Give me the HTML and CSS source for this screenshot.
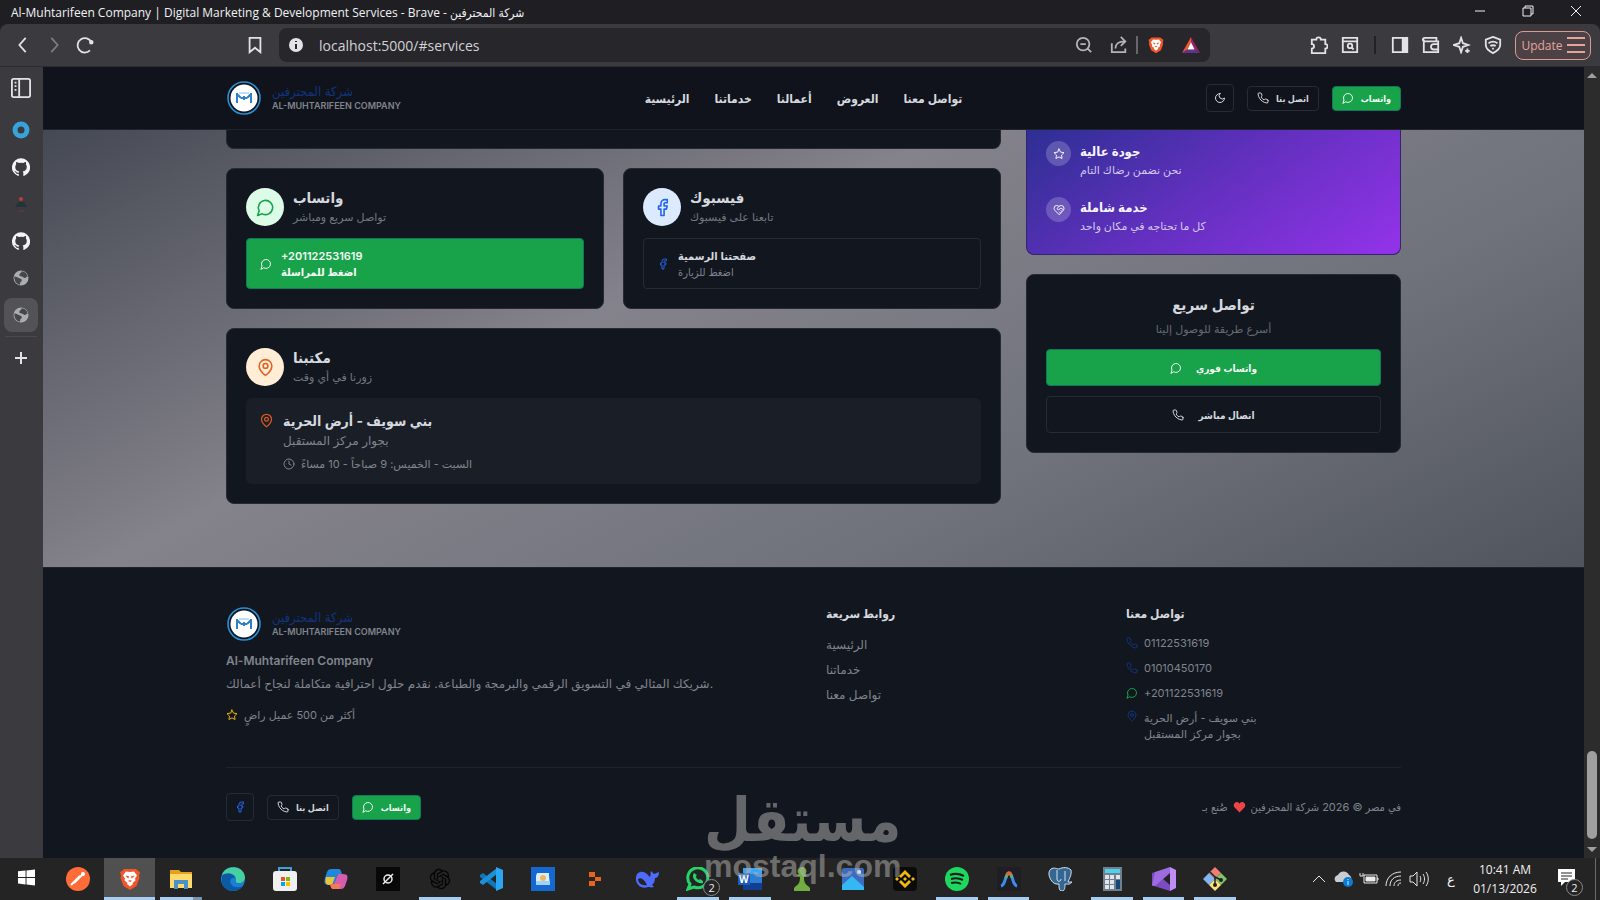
FILE: index.html
```html
<!DOCTYPE html>
<html lang="en">
  <head>
    <meta charset="UTF-8" />
    <meta name="viewport" content="width=device-width, initial-scale=1.0" />
    <title>Al-Muhtarifeen Company | Digital Marketing &amp; Development Services</title>
    <link rel="stylesheet" href="styles.css">
  </head>
  <body>
    <!-- Shared icons -->
    <svg class="sprite" aria-hidden="true">
      <symbol id="i-chat" viewBox="0 0 24 24"><path d="M7.9 20A9 9 0 1 0 4 16.1L2 22Z" /></symbol>
      <symbol id="i-phone" viewBox="0 0 24 24"><path d="M22 16.92v3a2 2 0 0 1-2.18 2 19.79 19.79 0 0 1-8.63-3.07 19.5 19.5 0 0 1-6-6 19.79 19.79 0 0 1-3.07-8.67A2 2 0 0 1 4.11 2h3a2 2 0 0 1 2 1.72c.127.96.361 1.903.7 2.81a2 2 0 0 1-.45 2.11L8.09 9.91a16 16 0 0 0 6 6l1.27-1.27a2 2 0 0 1 2.11-.45c.907.339 1.85.573 2.81.7A2 2 0 0 1 22 16.92z" /></symbol>
      <symbol id="i-pin" viewBox="0 0 24 24"><path d="M20 10c0 6-8 12-8 12s-8-6-8-12a8 8 0 0 1 16 0Z" /><circle cx="12" cy="10" r="3" /></symbol>
      <symbol id="i-facebook" viewBox="0 0 24 24"><path d="M18 2h-3a5 5 0 0 0-5 5v3H7v4h3v8h4v-8h3l1-4h-4V7a1 1 0 0 1 1-1h3z" /></symbol>
      <symbol id="i-star" viewBox="0 0 24 24"><path d="M12 2l3.09 6.26L22 9.27l-5 4.87 1.18 6.88L12 17.77l-6.18 3.25L7 14.14 2 9.27l6.91-1.01z" /></symbol>
      <symbol id="i-care" viewBox="0 0 24 24"><path d="M19 14c1.49-1.46 3-3.21 3-5.5A5.5 5.5 0 0 0 16.500 3c-1.760 0-3 .5-4.500 2-1.500-1.500-2.740-2-4.500-2A5.500 5.500 0 0 0 2 8.500c0 2.300 1.500 4.050 3 5.500l7 7Z" /><path d="M12 5 9.040 7.960a2.170 2.170 0 0 0 0 3.080c.820.820 2.130.850 3 .070l2.070-1.900a2.820 2.820 0 0 1 3.790 0l2.960 2.660M18 15l-2-2M15 18l-2-2" /></symbol>
      <symbol id="i-clock" viewBox="0 0 24 24"><circle cx="12" cy="12" r="10" /><path d="M12 6v6l4 2" /></symbol>
      <symbol id="i-moon" viewBox="0 0 24 24"><path d="M12 3a6 6 0 0 0 9 9 9 9 0 1 1-9-9Z" /></symbol>
      <symbol id="i-logo" viewBox="0 0 36 36">
        <circle cx="18" cy="18" r="16" fill="#0b1220" stroke="#2b8fd0" stroke-width="1.6" />
        <circle cx="18" cy="18" r="13.500" fill="#fff" />
        <path d="M11 23V13M25 23V13M11 14l4 4M25 14l-4 4M15 18h6M18 16v4" fill="none" stroke="#2f7fc9" stroke-width="2" />
        <path d="M13 13h10" stroke="#8ab9e8" stroke-width="1" />
      </symbol>
      <symbol id="i-github" viewBox="0 0 24 24"><path fill="#f4f4f6" d="M12 .5a12 12 0 0 0-3.800 23.400c.6.100.8-.3.8-.6v-2.200c-3.300.7-4-1.400-4-1.400-.5-1.400-1.300-1.800-1.300-1.800-1.100-.7.100-.7.100-.7 1.200.1 1.800 1.200 1.800 1.200 1.100 1.800 2.800 1.300 3.500 1 .1-.8.400-1.300.8-1.600-2.700-.3-5.500-1.300-5.500-6 0-1.300.5-2.400 1.200-3.200 0-.4-.5-1.600.2-3.200 0 0 1-.3 3.300 1.200a11.500 11.500 0 0 1 6 0c2.300-1.500 3.300-1.200 3.300-1.200.7 1.600.2 2.800.1 3.200.8.8 1.200 1.900 1.200 3.200 0 4.700-2.800 5.700-5.500 6 .5.400.9 1.200.9 2.300v3.200c0 .3.200.7.8.6A12 12 0 0 0 12 .5z" /></symbol>
      <symbol id="i-globe" viewBox="0 0 24 24"><circle cx="12" cy="12" r="10" fill="#a9acb1" /><path fill="#46464b" d="M3 10c3 0 4 1 6 2s4 1 4 3-2 2-2 3 0 2-1 3c-4-1-7-5-7-11zM13 3c4 0 7 3 8 7-2 0-2 2-4 2s-2-2-4-2-4-1-3-3 2-1 3-4z" /></symbol>
      <symbol id="i-brave" viewBox="0 0 24 24"><path fill="#f1562b" d="M6 2h12l2 2 2 1-1 4 .5 2-3 8L12 23l-6.500-4-3-8L3 9 2 5l2-1z" /><path fill="#fff" d="m12 5 4-.5 3 4-2 3 .5 2-3 2.500.5 1L12 19.500 9 17l.5-1-3-2.500.5-2-2-3 3-4z" /><path fill="#f1562b" d="m7.500 8.500 3.500.8-.5 2.200-2-1.500zM16.500 8.500l-3.500.8.5 2.200 2-1.500zM10 14l2-1 2 1-2 1z" /></symbol>
    </svg>

    <!-- Window title -->
    <header class="titlebar">
      <span class="window-title">Al-Muhtarifeen Company | Digital Marketing &amp; Development Services - Brave - شركة المحترفين</span>
      <div class="window-controls">
        <button aria-label="Minimize"><svg viewBox="0 0 12 12"><path d="M1 6h10" /></svg></button>
        <button aria-label="Restore"><svg viewBox="0 0 12 12"><path d="M1 3h8v8H1zM3 3V1h8v8H9" /></svg></button>
        <button aria-label="Close"><svg viewBox="0 0 12 12"><path d="m1 1 10 10M11 1 1 11" /></svg></button>
      </div>
    </header>

    <!-- Browser toolbar -->
    <div class="toolbar">
      <div class="nav-buttons">
        <button aria-label="Back"><svg viewBox="0 0 20 20"><path d="M13 2 6 10l7 8" /></svg></button>
        <button class="dim" aria-label="Forward"><svg viewBox="0 0 20 20"><path d="m7 2 7 8-7 8" /></svg></button>
        <button aria-label="Reload"><svg viewBox="0 0 20 20"><path d="M15.500 16A8 8 0 1 1 17 7" /><circle cx="17" cy="7" r="1.500" fill="currentColor" /></svg></button>
        <button class="bookmark" aria-label="Bookmark"><svg viewBox="0 0 20 20"><path d="M4 2h12v16l-6-5-6 5z" /></svg></button>
      </div>
      <div class="address-bar">
        <svg class="info" viewBox="0 0 16 16"><circle cx="8" cy="8" r="7" fill="#e3e3e6" /><path d="M8 7v5M8 4v1" stroke="#26262b" stroke-width="2" /></svg>
        <input type="text" aria-label="Address" value="localhost:5000/#services" />
        <button aria-label="Zoom"><svg viewBox="0 0 20 20"><circle cx="9" cy="9" r="7" /><path d="m14 14 4 4M6 9h6" /></svg></button>
        <button aria-label="Share"><svg viewBox="0 0 20 20"><path d="M2 8v10h15v-4M6 14c0-5 4-8 10-8M12 1l5 5-5 5" /></svg></button>
        <span class="separator"></span>
        <button class="shield" aria-label="Brave Shields"><svg><use href="#i-brave" /></svg></button>
        <button class="rewards" aria-label="Rewards"><svg viewBox="0 0 20 20"><path d="M10 1 0 19l6-4 4-8z" fill="#f2562f" /><path d="m10 1 10 18-6-4-4-8z" fill="#9c2069" /><path d="M0 19h20l-6-4H6z" fill="#65308f" /><path d="m10 7 4 8H6z" fill="#fff" /></svg></button>
      </div>
      <div class="tools">
        <button aria-label="Extensions"><svg viewBox="0 0 20 20"><path d="M2 4h5a2.500 2.500 0 0 1 5 0h5v5a2.500 2.500 0 0 1 0 5v5H2v-5a2.500 2.500 0 0 0 0-5z" /></svg></button>
        <button aria-label="Search tabs"><svg viewBox="0 0 20 20"><path d="M2 2h16v16H2zM2 6h16" /><circle cx="10" cy="11" r="2.500" /><path d="m12 13 2 2" /></svg></button>
        <span class="separator dark"></span>
        <button aria-label="Sidebar"><svg viewBox="0 0 20 20"><path d="M2 2h16v16H2z" /><path d="M13 2h5v16h-5z" fill="currentColor" /></svg></button>
        <button aria-label="Wallet"><svg viewBox="0 0 20 20"><path d="M16 6V2H3a2 2 0 0 0 0 4h15v12H2V4M18 9h-5a3 3 0 0 0 0 6h5" /></svg></button>
        <button aria-label="Leo AI"><svg viewBox="0 0 20 20"><path d="m9 2 2 6 6 2-6 2-2 6-2-6-6-2 6-2zM16 14v5M13.500 16.500h5" /></svg></button>
        <button aria-label="VPN"><svg viewBox="0 0 20 20"><path d="m10 1 8 3v6c0 4-4 7-8 9-4-2-8-5-8-9V4zM5 8c3-2 7-2 10 0M7 11c2-1 4-1 6 0M9 14h2" /></svg></button>
        <button class="update">Update <svg viewBox="0 0 18 18"><path d="M0 2h18M0 9h18M0 16h18" /></svg></button>
      </div>
    </div>

    <div class="workspace">
      <!-- Vertical tabs -->
      <nav class="tabs" aria-label="Tabs">
        <button class="panel" aria-label="Tab panel"><svg viewBox="0 0 22 22"><rect x="1" y="1" width="20" height="20" rx="2" /><path d="M9 1v20M4 5h2M4 9h2M4 13h2" /></svg></button>
        <button aria-label="Tab 1"><svg viewBox="0 0 18 18"><circle cx="9" cy="9" r="6" fill="none" stroke="#38a3d8" stroke-width="5" /></svg></button>
        <button aria-label="GitHub"><svg><use href="#i-github" /></svg></button>
        <button aria-label="Tab 3"><svg viewBox="0 0 18 18"><path d="M3 12h12l-3-5H6z" fill="#22343a" /><path d="M6 16h6" stroke="#7a3034" /><circle cx="9" cy="4" r="2" fill="#c23b35" /></svg></button>
        <button aria-label="GitHub"><svg><use href="#i-github" /></svg></button>
        <button aria-label="Tab 5"><svg><use href="#i-globe" /></svg></button>
        <button class="active" aria-label="Al-Muhtarifeen Company"><svg><use href="#i-globe" /></svg></button>
        <hr>
        <button class="new-tab" aria-label="New tab"><svg viewBox="0 0 18 18"><path d="M9 3v12M3 9h12" /></svg></button>
      </nav>

      <!-- Web page -->
      <div class="site">
        <header class="site-header">
          <div class="container">
            <a class="brand" href="#">
              <svg><use href="#i-logo" /></svg>
              <span><b>شركة المحترفين</b><small>AL-MUHTARIFEEN COMPANY</small></span>
            </a>
            <nav class="menu">
              <a href="#home">الرئيسية</a>
              <a href="#services">خدماتنا</a>
              <a href="#work">أعمالنا</a>
              <a href="#offers">العروض</a>
              <a href="#contact">تواصل معنا</a>
            </nav>
            <div class="actions">
              <button class="btn square" aria-label="Theme"><svg class="icon"><use href="#i-moon" /></svg></button>
              <button class="btn"><svg class="icon"><use href="#i-phone" /></svg>اتصل بنا</button>
              <button class="btn green"><svg class="icon"><use href="#i-chat" /></svg>واتساب</button>
            </div>
          </div>
        </header>

        <section class="contact" id="contact">
          <div class="container contact-grid">
            <div class="column cards">
              <div class="card card-end"></div>

              <article class="card">
                <div class="card-head">
                  <span class="badge mint"><svg class="icon"><use href="#i-chat" /></svg></span>
                  <div><h3>واتساب</h3><p>تواصل سريع ومباشر</p></div>
                </div>
                <button class="wide green">
                  <svg class="icon"><use href="#i-chat" /></svg>
                  <span><b>+201122531619</b><b>اضغط للمراسلة</b></span>
                </button>
              </article>

              <article class="card">
                <div class="card-head">
                  <span class="badge sky"><svg class="icon"><use href="#i-facebook" /></svg></span>
                  <div><h3>فيسبوك</h3><p>تابعنا على فيسبوك</p></div>
                </div>
                <button class="wide">
                  <svg class="icon blue"><use href="#i-facebook" /></svg>
                  <span><b>صفحتنا الرسمية</b><i>اضغط للزيارة</i></span>
                </button>
              </article>

              <article class="card full">
                <div class="card-head">
                  <span class="badge peach"><svg class="icon"><use href="#i-pin" /></svg></span>
                  <div><h3>مكتبنا</h3><p>زورنا في أي وقت</p></div>
                </div>
                <div class="office">
                  <svg class="icon"><use href="#i-pin" /></svg>
                  <div>
                    <h4>بني سويف - أرض الحرية</h4>
                    <p>بجوار مركز المستقبل</p>
                    <p class="hours"><svg class="icon"><use href="#i-clock" /></svg>السبت - الخميس: 9 صباحاً - 10 مساءً</p>
                  </div>
                </div>
              </article>
            </div>

            <div class="column">
              <ul class="card perks">
                <li>
                  <span class="dot"><svg class="icon"><use href="#i-star" /></svg></span>
                  <div><h4>جودة عالية</h4><p>نحن نضمن رضاك التام</p></div>
                </li>
                <li>
                  <span class="dot"><svg class="icon"><use href="#i-care" /></svg></span>
                  <div><h4>خدمة شاملة</h4><p>كل ما تحتاجه في مكان واحد</p></div>
                </li>
              </ul>
              <div class="card quick">
                <h3>تواصل سريع</h3>
                <p>أسرع طريقة للوصول إلينا</p>
                <button class="wide green"><svg class="icon"><use href="#i-chat" /></svg>واتساب فوري</button>
                <button class="wide"><svg class="icon"><use href="#i-phone" /></svg>اتصال مباشر</button>
              </div>
            </div>
          </div>
        </section>

        <footer class="site-footer">
          <div class="container">
            <div class="footer-grid">
              <div class="about">
                <a class="brand" href="#">
                  <svg><use href="#i-logo" /></svg>
                  <span><b>شركة المحترفين</b><small>AL-MUHTARIFEEN COMPANY</small></span>
                </a>
                <h4>Al-Muhtarifeen Company</h4>
                <p>شريكك المثالي في التسويق الرقمي والبرمجة والطباعة. نقدم حلول احترافية متكاملة لنجاح أعمالك.</p>
                <p class="clients"><svg class="icon"><use href="#i-star" /></svg>أكثر من 500 عميل راضٍ</p>
              </div>
              <div class="links">
                <h5>روابط سريعة</h5>
                <a href="#home">الرئيسية</a>
                <a href="#services">خدماتنا</a>
                <a href="#contact">تواصل معنا</a>
              </div>
              <address>
                <h5>تواصل معنا</h5>
                <p><svg class="icon"><use href="#i-phone" /></svg>01122531619</p>
                <p><svg class="icon"><use href="#i-phone" /></svg>01010450170</p>
                <p><svg class="icon chat"><use href="#i-chat" /></svg>+201122531619</p>
                <p class="place"><svg class="icon"><use href="#i-pin" /></svg><span>بني سويف - أرض الحرية<br>بجوار مركز المستقبل</span></p>
              </address>
            </div>
            <div class="footer-bottom">
              <div class="actions">
                <button class="btn square" aria-label="Facebook"><svg class="icon blue"><use href="#i-facebook" /></svg></button>
                <button class="btn"><svg class="icon"><use href="#i-phone" /></svg>اتصل بنا</button>
                <button class="btn green"><svg class="icon"><use href="#i-chat" /></svg>واتساب</button>
              </div>
              <p class="copyright">
                <span>صُنع بـ</span>
                <svg viewBox="0 0 24 24"><path fill="#ef4444" d="M12 21 3 12C-1 7 3 2 7 2c2 0 4 1 5 3 1-2 3-3 5-3 4 0 8 5 4 10z" /></svg>
                <span>في مصر © 2026 شركة المحترفين</span>
              </p>
            </div>
          </div>
        </footer>
      </div>

      <div class="scrollbar"><span class="arrow up"></span><span class="thumb"></span><span class="arrow down"></span></div>
    </div>

    <!-- Taskbar -->
    <footer class="taskbar">
      <button class="start" aria-label="Start"><svg viewBox="0 0 18 18"><path fill="#fff" d="m0 3 8-1v7H0zM9 2l9-1v8H9zM0 10h8v7l-8-1zM9 10h9v8l-9-1z" /></svg></button>
      <div class="apps">
        <button aria-label="Postman"><svg viewBox="0 0 24 24"><circle cx="12" cy="12" r="12" fill="#ff6c37" /><path d="m5 18 9-9M8 16l9-9" stroke="#fff" stroke-width="2" /><circle cx="17" cy="7" r="2" fill="#fff" /></svg></button>
        <button class="focused" aria-label="Brave"><svg><use href="#i-brave" /></svg></button>
        <button class="open split" aria-label="File Explorer"><svg viewBox="0 0 24 24"><path d="M1 3h9l2 2h11v16H1z" fill="#e3a21a" /><path d="M1 7h22v14H1z" fill="#ffd96b" /><path d="M5 22v-9h14v9h-4v-5H9v5z" fill="#4a92c6" /></svg></button>
        <button aria-label="Edge"><svg viewBox="0 0 24 24"><circle cx="12" cy="12" r="12" fill="#1b7fd1" /><path d="M1 8C4-2 22-3 24 10c0 4-3 6-6 6-4 0-3-2-3-4 0-5-9-7-14-4z" fill="#46cfa0" /><path d="M1 9c4-4 12-3 13 2-4-1-6 3-4 6 2 4 8 4 12 2-5 7-18 7-21-3z" fill="#0c59a4" /></svg></button>
        <button aria-label="Store"><svg viewBox="0 0 24 24"><path d="M6 5V1h12v4" fill="none" stroke="#3aa0d8" stroke-width="2" /><rect y="4" width="24" height="20" rx="3" fill="#f0f0f0" /><path d="M8 10h4v4H8z" fill="#f25022" /><path d="M13 10h4v4h-4z" fill="#7fba00" /><path d="M8 15h4v4H8z" fill="#00a4ef" /><path d="M13 15h4v4h-4z" fill="#ffb900" /></svg></button>
        <button aria-label="Copilot"><svg viewBox="0 0 24 24"><path d="M7 2h7c3 0 3 2 4 5h-4l-4 11H5c-5 0-5-3-4-7l2-6c1-2 2-3 4-3z" fill="#1e88dd" /><path d="M2 10h9L8 18H5c-4 0-4-4-3-8z" fill="#e9c43a" /><path d="M17 22h-7c-3 0-3-2-4-5h4l4-10h5c5 0 5 3 4 6l-2 6c-1 2-2 3-4 3z" fill="#d65cae" /><path d="M6 17h11l-2 5h-5c-3 0-3-2-4-5z" fill="#f47a56" /></svg></button>
        <button aria-label="Grok"><svg viewBox="0 0 24 24"><path d="M0 0h24v24H0z" fill="#080808" /><circle cx="12" cy="12" r="4" fill="none" stroke="#eee" stroke-width="1.500" /><path d="m7 17 10-10" stroke="#eee" stroke-width="1.500" /></svg></button>
        <button class="open" aria-label="ChatGPT"><svg viewBox="-2 -2 28 28"><path fill="#050505" d="M22.2819 9.8211a5.9847 5.9847 0 0 0-.5157-4.9108 6.0462 6.0462 0 0 0-6.5098-2.9A6.0651 6.0651 0 0 0 4.9807 4.1818a5.9847 5.9847 0 0 0-3.9977 2.9 6.0462 6.0462 0 0 0 .7427 7.0966 5.98 5.98 0 0 0 .511 4.9107 6.051 6.051 0 0 0 6.5146 2.9001A5.9847 5.9847 0 0 0 13.2599 24a6.0557 6.0557 0 0 0 5.7718-4.2058 5.9894 5.9894 0 0 0 3.9977-2.9001 6.0557 6.0557 0 0 0-.7475-7.0729zm-9.022 12.6081a4.4755 4.4755 0 0 1-2.8764-1.0408l.1419-.0804 4.7783-2.7582a.7948.7948 0 0 0 .3927-.6813v-6.7369l2.02 1.1686a.071.071 0 0 1 .038.052v5.5826a4.504 4.504 0 0 1-4.4945 4.4944zm-9.6607-4.1254a4.4708 4.4708 0 0 1-.5346-3.0137l.142.0852 4.783 2.7582a.7712.7712 0 0 0 .7806 0l5.8428-3.3685v2.3324a.0804.0804 0 0 1-.0332.0615L9.74 19.9502a4.4992 4.4992 0 0 1-6.1408-1.6464zM2.3408 7.8956a4.485 4.485 0 0 1 2.3655-1.9728V11.6a.7664.7664 0 0 0 .3879.6765l5.8144 3.3543-2.0201 1.1685a.0757.0757 0 0 1-.071 0l-4.8303-2.7865A4.504 4.504 0 0 1 2.3408 7.872zm16.5963 3.8558L13.1038 8.364 15.1192 7.2a.0757.0757 0 0 1 .071 0l4.8303 2.7913a4.4944 4.4944 0 0 1-.6765 8.1042v-5.6772a.79.79 0 0 0-.407-.667zm2.0107-3.0231l-.142-.0852-4.7735-2.7818a.7759.7759 0 0 0-.7854 0L9.409 9.2297V6.8974a.0662.0662 0 0 1 .0284-.0615l4.8303-2.7866a4.4992 4.4992 0 0 1 6.6802 4.66zM8.3065 12.863l-2.02-1.1638a.0804.0804 0 0 1-.038-.0567V6.0742a4.4992 4.4992 0 0 1 7.3757-3.4537l-.142.0805L8.704 5.459a.7948.7948 0 0 0-.3927.6813zm1.0976-2.3654l2.602-1.4998 2.6069 1.4998v2.9994l-2.5974 1.4997-2.6067-1.4997Z" /></svg></button>
        <button aria-label="VS Code"><svg viewBox="0 0 24 24"><path d="m1 8 3-2 14 11v6L1 10z" fill="#1177bb" /><path d="m1 16 3 2L18 7V1L1 14z" fill="#1c8fd8" /><path d="m17 0 7 3v18l-7 3z" fill="#2aa6f2" /></svg></button>
        <button aria-label="Photos Legacy"><svg viewBox="0 0 24 24"><path d="M0 0h24v24H0z" fill="#1468cf" /><path d="M6 6h12v3l1 9H5V9z" fill="#d8eefc" /><circle cx="12" cy="11" r="3" fill="#f2b860" /><path d="M5 14h14v4H5z" fill="#9fd3f5" /></svg></button>
        <button aria-label="Replit"><svg viewBox="0 0 24 24"><path d="M6 5h6v5H6zM12 10h6v4h-6zM6 14h6v5H6z" fill="#e4651b" /></svg></button>
        <button aria-label="DeepSeek"><svg viewBox="0 0 24 24"><path d="M2 7c4-4 8-2 10 0l3 3c1-2 0-4 1-6l3 3 5-2c0 4-2 6-4 6 0 3-1 5-3 7l2 2c-3 1-5 0-6 0C5 23-2 15 2 7z" fill="#4d6bfe" /><path d="M3 12c3-2 6 0 9 6-5 1-9-2-9-6z" fill="#242424" /></svg></button>
        <button class="open" aria-label="WhatsApp"><svg viewBox="0 0 24 24"><path d="M2 22 4 17A10 10 0 1 1 8 20z" fill="#242424" stroke="#25d366" stroke-width="3" /><path d="M8 6c-4 5 4 12 9 10l0-2-3-2-1 1c-2-1-3-2-3-4l1-1z" fill="#25d366" /></svg><span class="count">2</span></button>
        <button class="open" aria-label="Word"><svg viewBox="0 0 24 24"><path d="M5 1h19v22H5z" fill="#2b7cd3" /><path d="M5 1h19v6H5z" fill="#41a5ee" /><path d="M5 16h19v7H5z" fill="#103f91" /><path d="M0 6h12v12H0z" fill="#185abd" /><text x="1" y="16">W</text></svg></button>
        <button aria-label="Chess"><svg viewBox="0 0 24 24"><path d="M12 0a4 4 0 0 1 3 7l2 2-3 1c0 5 1 7 4 9l2 2v3H4v-3l2-2c3-2 4-4 4-9L7 9l2-2a4 4 0 0 1 3-7z" fill="#71ad43" /></svg></button>
        <button aria-label="Photos"><svg viewBox="0 0 24 24"><rect x="1" y="1" width="22" height="22" rx="2" fill="#3b6cc0" /><path d="m1 18 10-9 12 11v3H1z" fill="#35b7f3" /><circle cx="18" cy="5" r="2" fill="#fff" /></svg></button>
        <button aria-label="Binance"><svg viewBox="0 0 24 24"><rect width="24" height="24" rx="4" fill="#0b0b0c" /><path d="m6 9 6-6 6 6-2 2-4-4-4 4zM6 15l6 6 6-6-2-2-4 4-4-4zM2 12l2-2 2 2-2 2zM18 12l2-2 2 2-2 2zM10 12l2-2 2 2-2 2z" fill="#f0b90b" /></svg></button>
        <button class="open" aria-label="Spotify"><svg viewBox="0 0 24 24"><circle cx="12" cy="12" r="12" fill="#1ed760" /><path d="M5 8c5-2 10-1 14 1M6 12c4-1 8-1 12 1M6 16c4-1 7-1 10 1" fill="none" stroke="#17201a" stroke-width="2" /></svg></button>
        <button class="open" aria-label="Antigravity"><svg viewBox="0 0 24 24"><path d="M0 0h24v24H0z" fill="#1e1e24" /><path d="M4 19C9 18 8 6 12 6s3 12 8 13" fill="none" stroke="#3f8cf0" stroke-width="3" /><path d="M9 11c1-6 5-6 6 0" fill="none" stroke="#5bb36a" stroke-width="3" /><path d="M10 8c1-3 3-3 4 0" fill="none" stroke="#e8603c" stroke-width="3" /></svg></button>
        <button aria-label="PostgreSQL"><svg viewBox="0 0 24 24"><path d="M3 2c3-2 6 0 8 0 4-2 9-2 12 1 1 5-2 9-3 12h4c-2 3-5 2-7 2 0 3 0 7-3 7s-3-3-3-7H8C3 16-2 6 3 2z" fill="#336791" stroke="#d6e3ee" stroke-width="1" /><path d="M9 3v9c0 3 4 3 4 0M17 4v10" fill="none" stroke="#d6e3ee" /></svg></button>
        <button class="open" aria-label="Calculator"><svg viewBox="0 0 24 24"><path d="M3 0h19v24H3z" fill="#71808d" /><path d="M5 2h15v4H5z" fill="#4fd0ef" /><path d="M5 8h4v4H5zM10 8h4v4h-4zM16 8h4v4h-4zM5 13h4v4H5zM10 13h4v4h-4zM5 18h4v4H5zM10 18h4v4h-4z" fill="#dfe5ea" /><path d="M16 13h4v9h-4z" fill="#12477c" /></svg></button>
        <button class="open" aria-label="Visual Studio"><svg viewBox="0 0 24 24"><path d="m0 6 3-1 15 13v6L2 19H0z" fill="#7b4bc0" /><path d="m0 18 3 1L18 6V0L3 5z" fill="#9d6be0" /><path d="m18 0 6 3v18l-6 3z" fill="#c18cf5" /></svg></button>
        <button class="open" aria-label="Git"><svg viewBox="0 0 24 24"><path d="m12 0 6 6-6 6-6-6z" fill="#ef7f74" /><path d="m18 6 6 6-6 6-6-6z" fill="#83c46a" /><path d="m6 6 6 6-6 6-6-6z" fill="#84b6f5" /><path d="m12 12 6 6-6 6-6-6z" fill="#ffe17a" /><path d="m7 5 5 5v9M12 10l6 3" fill="none" stroke="#222" stroke-width="1.500" /><circle cx="12" cy="18" r="2" fill="#222" /><circle cx="18" cy="13" r="2" fill="#222" /></svg></button>
      </div>
      <div class="tray">
        <svg viewBox="0 0 20 20"><path d="m4 13 6-6 6 6" /></svg>
        <svg viewBox="0 0 20 20"><path d="M2 13a4 4 0 0 1 2-7 6 6 0 0 1 11 0c3 1 3 6 1 7z" fill="#c9cdd1" stroke="none" /><circle cx="14" cy="13" r="5" fill="#0b7bd4" stroke="none" /><path d="M14 12v4M14 10v1" /></svg>
        <svg viewBox="0 0 20 20"><path d="M5 6h13v8H5zM18 9h1v2h-1M1 4v3h3V4" /><path d="M7 8h9v4H7z" fill="#eee" /></svg>
        <svg viewBox="0 0 20 20"><path d="M2 17C2 9 8 3 17 3M6 17C6 11 10 7 17 7M10 17c0-4 3-6 7-6M14 17c0-2 1-3 3-3" /></svg>
        <svg viewBox="0 0 20 20"><path d="M1 7h3l4-4v14l-4-4H1zM11 7c1 2 1 4 0 6M14 5c2 3 2 7 0 10M17 3c3 4 3 10 0 14" /></svg>
        <span class="lang">ع</span>
        <time>10:41 AM<br>01/13/2026</time>
        <button class="notifications" aria-label="Notifications"><svg viewBox="0 0 20 20"><path d="M2 2h17v13H9l-4 4v-4H2z" fill="#fff" stroke="none" /><path d="M5 6h11M5 9h11M5 12h7" stroke="#222" /></svg><span class="count">2</span></button>
      </div>
    </footer>

    <div class="watermark"><b>مستقل</b><span>mostaql.com</span></div>
  </body>
</html>
```
FILE: styles.css
```css
* {
  box-sizing: border-box;
}

body {
  margin: 0;
  height: 100vh;
  display: flex;
  flex-direction: column;
  overflow: hidden;
  background-color: #1f1f23;
  font-family: Inter, "DejaVu Sans", sans-serif;
  color: #d5d8de;
}

button {
  margin: 0;
  padding: 0;
  border: none;
  background: none;
  color: inherit;
  font-family: inherit;
  cursor: pointer;
}

h3,
h4,
h5,
p,
ul {
  margin: 0;
  padding: 0;
}

h3,
h4,
h5,
.menu,
.btn,
.wide {
  font-family: Inter, "DejaVu Sans Condensed", sans-serif;
}

a {
  color: inherit;
  text-decoration: none;
}

.sprite {
  position: absolute;
  width: 0;
  height: 0;
}

.icon {
  width: 12px;
  height: 12px;
  flex: none;
  fill: none;
  stroke: currentColor;
  stroke-width: 2;
  stroke-linecap: round;
  stroke-linejoin: round;
}

.blue {
  color: #2563eb;
}

/* Title bar */
.titlebar {
  flex: none;
  height: 24px;
  padding-left: 11px;
  display: flex;
  align-items: center;
  justify-content: space-between;
  font-family: "Open Sans", "DejaVu Sans Condensed", sans-serif;
  font-size: 12px;
  color: #f1f1f3;
}

.window-controls {
  display: flex;
}

.window-controls button {
  width: 48px;
  height: 24px;
}

.window-controls svg {
  width: 12px;
  height: 12px;
  fill: none;
  stroke: #f1f1f3;
}

/* Toolbar */
.toolbar {
  flex: none;
  height: 43px;
  display: flex;
  align-items: center;
  background-color: #3b3a3f;
  border-radius: 8px 8px 0 0;
  border-bottom: 1px solid #2c2c30;
  font-family: "Open Sans", sans-serif;
  color: #e3e3e6;
}

.toolbar svg {
  width: 18px;
  height: 18px;
  display: block;
  fill: none;
  stroke: currentColor;
  stroke-width: 2;
}

.nav-buttons {
  flex: none;
  width: 279px;
  padding: 0 15px 0 14px;
  display: flex;
  gap: 13px;
}

.dim {
  color: #7d7c81;
}

.bookmark {
  margin-left: auto;
}

.address-bar {
  flex: 1;
  height: 34px;
  padding: 0 6px 0 9px;
  display: flex;
  align-items: center;
  gap: 8px;
  background-color: #26262b;
  border-radius: 8px;
}

.address-bar .info {
  width: 16px;
  height: 16px;
  margin-right: 5px;
  stroke: none;
}

.address-bar input {
  flex: 1;
  border: none;
  outline: none;
  background: none;
  color: #d3d3d6;
  font-family: "Open Sans", sans-serif;
  font-size: 14px;
}

.address-bar button {
  width: 27px;
  padding: 0 5px;
  color: #b4b4b9;
}

.address-bar .shield svg,
.address-bar .rewards svg {
  stroke: none;
}

.separator {
  width: 2px;
  height: 18px;
  margin: 0 -4px;
  background-color: #66666b;
}

.separator.dark {
  margin: 0 2px;
  background-color: #222226;
}

.tools {
  flex: none;
  width: 390px;
  padding-right: 9px;
  display: flex;
  align-items: center;
  justify-content: flex-end;
  gap: 13px;
}

.update {
  width: 76px;
  height: 29px;
  display: flex;
  align-items: center;
  justify-content: center;
  gap: 4px;
  border: 1px solid #dc9a94;
  border-radius: 8px;
  background-color: #4c4245;
  color: #e5a49e;
  font-size: 12px;
}

/* Main area */
.workspace {
  flex: 1;
  min-height: 0;
  display: flex;
}

.tabs {
  flex: none;
  width: 43px;
  padding: 4px 1px 0 0;
  display: flex;
  flex-direction: column;
  align-items: center;
  gap: 3px;
  background-color: #3b3a3f;
}

.tabs button {
  width: 34px;
  height: 34px;
  display: flex;
  align-items: center;
  justify-content: center;
  border-radius: 8px;
}

.tabs svg {
  width: 18px;
  height: 18px;
}

.tabs .panel {
  margin-bottom: 5px;
}

.panel svg {
  width: 20px;
  height: 20px;
  fill: none;
  stroke: #e3e3e6;
  stroke-width: 2;
}

.tabs .active {
  background-color: #535257;
}

.tabs hr {
  width: 32px;
  margin: 1px 0;
  border: none;
  border-top: 1px solid #4a494e;
}

.new-tab svg {
  stroke: #e3e3e6;
  stroke-width: 2;
}

.scrollbar {
  flex: none;
  width: 16px;
  padding: 6px 0;
  display: flex;
  flex-direction: column;
  align-items: center;
  background-color: #2c2c2c;
}

.thumb {
  width: 10px;
  height: 88px;
  margin: auto 0 8px;
  border-radius: 5px;
  background-color: #9f9f9f;
}

.arrow {
  border: 5px solid transparent;
}

.arrow.up {
  border-top: none;
  border-bottom-color: #9f9f9f;
}

.arrow.down {
  border-bottom: none;
  border-top-color: #9f9f9f;
}

/* Web page */
.site {
  flex: 1;
  min-width: 0;
  display: flex;
  flex-direction: column;
  background-color: #12171f;
}

.container {
  width: 100%;
  max-width: 1175px;
  margin: 0 auto;
}

.site-header {
  flex: none;
  background-color: #10131b;
  border-bottom: 1px solid #1e232c;
}

.site-header .container {
  height: 62px;
  display: flex;
  align-items: center;
  justify-content: space-between;
}

.brand {
  display: flex;
  align-items: center;
  gap: 10px;
}

.brand svg {
  width: 36px;
  height: 36px;
}

.brand b {
  display: block;
  color: #11347c;
  font-family: "DejaVu Sans Condensed", sans-serif;
  font-size: 13px;
  font-weight: normal;
  line-height: 15px;
}

.brand small {
  display: block;
  color: #80848d;
  font-size: 9px;
  font-weight: 600;
  line-height: 13px;
}

.menu {
  display: flex;
  gap: 25px;
  font-size: 12px;
  font-weight: 600;
}

.actions {
  display: flex;
  align-items: center;
  gap: 13px;
}

.btn {
  height: 25px;
  padding: 0 9px;
  display: flex;
  align-items: center;
  gap: 7px;
  border: 1px solid #262b34;
  border-radius: 4px;
  color: #d5d8de;
  font-size: 9px;
  font-weight: 600;
}

.btn.square {
  width: 28px;
  height: 28px;
  padding: 0;
  justify-content: center;
}

.green,
.btn.green {
  border-color: #0f7a5f;
  background-color: #18a34a;
  color: #f3fbf5;
}

/* Contact section */
.contact {
  padding-bottom: 63px;
  background-image: linear-gradient(153deg, #454953 0%, #84828b 38%, #70737c 68%, #50545d 100%);
}

.contact-grid {
  display: grid;
  grid-template-columns: repeat(3, 1fr);
  gap: 25px;
  align-items: start;
}

.column {
  display: grid;
  gap: 19px;
}

.cards {
  grid-column: span 2;
  grid-template-columns: 1fr 1fr;
}

.card {
  padding: 19px;
  background-color: #12171f;
  border: 1px solid #252a33;
  border-radius: 8px;
}

.card-end {
  grid-column: span 2;
  height: 19px;
  padding: 0;
  border-top: none;
  border-radius: 0 0 8px 8px;
}

.full {
  grid-column: span 2;
}

.card-head {
  margin-bottom: 12px;
  display: flex;
  align-items: center;
  gap: 9px;
}

.card h3 {
  font-size: 15px;
  line-height: 20px;
}

.card-head p {
  color: #737882;
  font-size: 11px;
  line-height: 18px;
}

.badge {
  width: 38px;
  height: 38px;
  display: flex;
  align-items: center;
  justify-content: center;
  border-radius: 50%;
}

.badge .icon {
  width: 19px;
  height: 19px;
}

.mint {
  background-color: #dcfce7;
  color: #16a34a;
}

.sky {
  background-color: #dbeafe;
  color: #2563eb;
}

.peach {
  background-color: #ffedd5;
  color: #dc6526;
}

.wide {
  width: 100%;
  height: 51px;
  padding: 0 13px;
  display: flex;
  align-items: center;
  gap: 9px;
  border: 1px solid #262b34;
  border-radius: 4px;
  font-size: 11px;
  font-weight: 600;
  text-align: left;
}

.wide.green {
  border-color: #0f7a5f;
}

.wide b,
.wide i {
  display: block;
  font-style: normal;
  font-weight: 600;
  line-height: 16px;
}

.wide i {
  color: #80848d;
  font-weight: 500;
}

.office {
  padding: 13px;
  display: flex;
  gap: 9px;
  background-color: #1a1f27;
  border-radius: 6px;
}

.office > .icon {
  width: 15px;
  height: 15px;
  margin-top: 2px;
  color: #dc5a1e;
}

.office h4 {
  font-size: 14px;
  line-height: 20px;
}

.office p {
  color: #80848d;
  font-size: 12px;
  line-height: 20px;
}

.office .hours {
  margin-top: 6px;
  display: flex;
  align-items: center;
  gap: 6px;
  font-size: 11px;
  line-height: 14px;
}

.perks {
  padding-top: 11px;
  display: grid;
  gap: 18px;
  list-style: none;
  background-image: linear-gradient(145deg, #2d2f93, #6430c0 50%, #9333ea);
  border-color: #33246d;
  border-top: none;
  border-radius: 0 0 8px 8px;
  color: #f5f3ff;
}

.perks li {
  display: flex;
  gap: 9px;
}

.perks h4 {
  font-size: 13px;
  line-height: 20px;
}

.perks p {
  color: #d3c9f3;
  font-size: 11px;
  font-weight: 500;
  line-height: 18px;
}

.dot {
  width: 25px;
  height: 25px;
  display: flex;
  align-items: center;
  justify-content: center;
  border-radius: 50%;
  background-color: rgba(255, 255, 255, 0.2);
}

.quick {
  text-align: center;
}

.quick h3 {
  line-height: 22px;
}

.quick p {
  margin: 4px 0 10px;
  color: #656a74;
  font-size: 11px;
  line-height: 19px;
}

.quick .wide {
  height: 37px;
  justify-content: center;
  gap: 14px;
  font-size: 10px;
}

.quick .wide + .wide {
  margin-top: 10px;
}

/* Footer */
.site-footer {
  padding-top: 38px;
  border-top: 1px solid #1e232c;
  color: #80848d;
}

.footer-grid {
  padding-bottom: 25px;
  display: grid;
  grid-template-columns: repeat(4, 1fr);
  gap: 25px;
  border-bottom: 1px solid #1e232c;
}

.about {
  grid-column: span 2;
}

.about h4 {
  margin-top: 9px;
  font-size: 12px;
  font-weight: 600;
  line-height: 20px;
}

.about p {
  margin-top: 2px;
  font-size: 12px;
  line-height: 22px;
}

.about .clients {
  margin-top: 9px;
  display: flex;
  align-items: center;
  gap: 6px;
  font-size: 11px;
}

.clients .icon {
  color: #eab308;
}

h5 {
  margin: 0 0 10px;
  color: #d5d8de;
  font-size: 12px;
  line-height: 16px;
}

.links a {
  display: block;
  font-size: 12px;
  line-height: 25px;
}

address {
  font-size: 11px;
  font-style: normal;
  line-height: 16px;
}

address h5 {
  margin-bottom: 13px;
}

address p {
  margin-bottom: 9px;
  display: flex;
  align-items: center;
  gap: 6px;
}

address .icon {
  color: #11347c;
}

address .chat {
  color: #16a34a;
}

address .place {
  margin-bottom: 0;
  align-items: flex-start;
}

.footer-bottom {
  padding-top: 25px;
  display: flex;
  align-items: center;
  justify-content: space-between;
}

.copyright {
  display: flex;
  align-items: center;
  gap: 5px;
  font-family: Inter, "DejaVu Sans Condensed", sans-serif;
  font-size: 11px;
}

.copyright svg {
  width: 13px;
  height: 13px;
}

/* Taskbar */
.taskbar {
  flex: none;
  height: 42px;
  display: flex;
  background-color: #242424;
  font-family: "Open Sans", "DejaVu Sans", sans-serif;
  color: #f0f0f0;
}

.start {
  width: 52px;
}

.start svg {
  width: 17px;
  height: 18px;
}

.apps {
  flex: 1;
  max-width: 1189px;
  display: flex;
}

.apps button {
  position: relative;
  flex: 1;
  display: flex;
  align-items: center;
  justify-content: center;
}

.apps svg {
  width: 24px;
  height: 24px;
}

.apps text {
  fill: #fff;
  font-size: 10px;
  font-weight: bold;
}

.focused {
  background-color: #505050;
}

.focused::after,
.open::after {
  content: "";
  position: absolute;
  left: 5px;
  right: 5px;
  bottom: 0;
  height: 3px;
  background-color: #a6cdf2;
}

.focused::after {
  left: 0;
  right: 0;
}

.split::after {
  border-right: 9px solid #7994ad;
}

.count {
  position: absolute;
  right: 4px;
  bottom: 4px;
  width: 17px;
  height: 17px;
  border: 1px solid #8a8a8a;
  border-radius: 50%;
  background-color: #242424;
  font-size: 11px;
  line-height: 15px;
  text-align: center;
}

.tray {
  flex: none;
  margin-left: auto;
  display: flex;
  align-items: center;
  gap: 5px;
}

.tray svg {
  width: 20px;
  height: 20px;
  fill: none;
  stroke: #e8e8e8;
}

.lang {
  width: 26px;
  margin-left: 4px;
  font-size: 13px;
  text-align: center;
}

.tray time {
  width: 72px;
  font-size: 12px;
  line-height: 19px;
  text-align: center;
}

.notifications {
  position: relative;
  width: 50px;
  height: 42px;
  margin-right: 4px;
  padding-right: 9px;
  border-right: 1px solid #6a6a6a;
}

.notifications .count {
  right: 12px;
}

/* Watermark over the page and the taskbar */
.watermark {
  position: absolute;
  left: 50%;
  bottom: 18px;
  width: 192px;
  margin-left: -96px;
  color: #b5b5b5;
  opacity: 0.5;
  text-align: center;
  pointer-events: none;
}

.watermark b {
  display: block;
  font-family: "DejaVu Sans Condensed", sans-serif;
  font-size: 60px;
  line-height: 60px;
}

.watermark span {
  display: block;
  font-family: "Liberation Sans", sans-serif;
  font-size: 32px;
  font-weight: bold;
  line-height: 32px;
}
```
